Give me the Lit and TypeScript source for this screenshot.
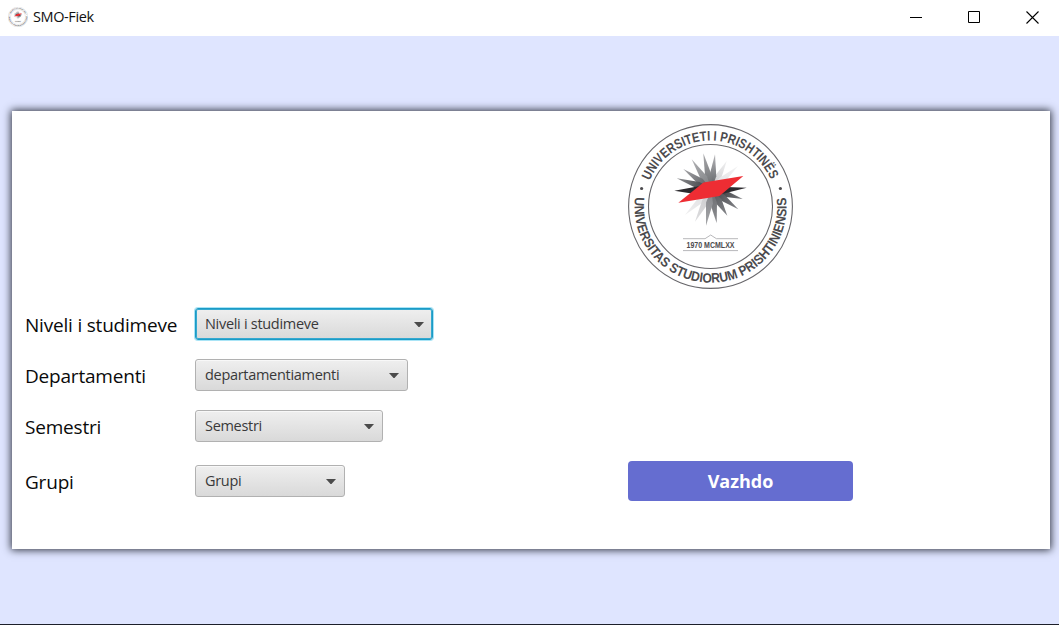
import { LitElement, html, svg, css } from "lit";
import { customElement, property } from "lit/decorators.js";

type Spike = [number, number, string, string];

// Tip x, tip y, inner shade, outer shade
const SPIKES: Spike[] = [
  [98.7, 37, "#d2d2d4", "#efeff0"],
  [110, 42, "#e4e4e6", "#f3f3f4"],
  [57, 91, "#e2e2e4", "#efeff0"],
  [67, 97.7, "#cfcfd1", "#dcdcde"],
  [87, 30.3, "#707276", "#b4b4b7"],
  [75.3, 29.3, "#77797c", "#aaaaad"],
  [63.7, 35.3, "#87898c", "#b0b0b3"],
  [55.3, 45, "#66686c", "#a4a4a7"],
  [48.7, 54.3, "#48494d", "#8f9093"],
  [114.7, 75, "#3c3d41", "#7b7c80"],
  [110.3, 85.3, "#505156", "#85868a"],
  [99.3, 91.7, "#5e6064", "#85868a"],
  [88.7, 99.3, "#727377", "#8e8f93"],
  [78, 101.7, "#8c8d91", "#a4a5a8"],
];
const CX = 83.5;
const CY = 65.5;

@customElement("university-seal")
export class UniversitySeal extends LitElement {
  @property({ type: Number }) size = 165;

  static styles = css`
    :host { display: block; flex: none; }
    svg { display: block; }
    .ring { font-family: "Liberation Sans Narrow", "Liberation Sans", sans-serif; font-weight: 700; fill: #4c4b4e; }
    .year { font-family: "Liberation Sans", sans-serif; font-weight: 700; font-size: 8.6px; fill: #4c4b4e; }
  `;

  private spike([x, y, inner, outer]: Spike, i: number) {
    const a = Math.atan2(y - CY, x - CX);
    const p = (d: number) => `${CX + 14 * Math.cos(a + d)},${CY + 14 * Math.sin(a + d)}`;
    return svg`
      <linearGradient id="g${i}" gradientUnits="userSpaceOnUse" x1=${CX} y1=${CY} x2=${x} y2=${y}>
        <stop offset=".25" stop-color=${inner}></stop><stop offset="1" stop-color=${outer}></stop>
      </linearGradient>
      <polygon points="${x},${y} ${p(0.25)} ${CX},${CY} ${p(-0.25)}" fill="url(#g${i})"></polygon>`;
  }

  render() {
    return html`
      <svg width=${this.size} height=${this.size} viewBox="0 0 165 165">
        <defs>
          <path id="upper" d="M21.75 56.7A66 66 0 0 1 143.25 56.7"></path>
          <path id="lower" d="M7.1 73.2A76 76 0 1 0 157.9 73.2"></path>
        </defs>
        <circle cx="82.5" cy="82.5" r="81.9" fill="#fff" stroke="#67666a" stroke-width="1.1"></circle>
        <circle cx="82.5" cy="82.5" r="62" fill="none" stroke="#67666a" stroke-width="1.1"></circle>
        <text class="ring" font-size="13.6"><textPath href="#upper" textLength="153" lengthAdjust="spacingAndGlyphs">UNIVERSITETI I PRISHTINËS</textPath></text>
        <text class="ring" font-size="13.6"><textPath href="#lower" textLength="257" lengthAdjust="spacingAndGlyphs">UNIVERSITAS STUDIORUM PRISHTINIENSIS</textPath></text>
        <circle cx="13.6" cy="64.5" r="1.6" fill="#4c4b4e"></circle>
        <circle cx="152.4" cy="64.5" r="1.6" fill="#4c4b4e"></circle>
        ${SPIKES.map((s, i) => this.spike(s, i))}
        <polygon points="46.3,66.7 72,62 118.7,63.7 96,69.5 70,70.5" fill="#2c2a2e"></polygon>
        <polygon points="50.3,78.7 75.5,58.5 115.3,52 91.5,72" fill="#ee2d33"></polygon>
        <path d="M55 114.7h22l5.700-3.700 5.700 3.700h21.600M55 126.600h55" fill="none" stroke="#a5a5a8" stroke-width=".8"></path>
        <text class="year" x="58.5" y="123.700" textLength="48" lengthAdjust="spacingAndGlyphs">1970 MCMLXX</text>
      </svg>`;
  }
}

@customElement("combo-box")
export class ComboBox extends LitElement {
  @property() value = "";
  @property({ type: Boolean, reflect: true }) focused = false;

  static styles = css`
    :host {
      box-sizing: border-box; display: flex; align-items: center; justify-content: space-between;
      height: 32px; padding: 0 8px 0 9px; border: 1px solid #b1b1b1; border-radius: 3px;
      background: linear-gradient(#efefef, #d9d9d9); box-shadow: inset 0 1px #f8f8f8;
      font: 14.5px/30px "Open Sans", "Noto Sans", sans-serif; letter-spacing: -.3px; color: #39393a;
    }
    :host([focused]) { border-color: #1c9bc6; box-shadow: 0 0 0 1px #a9e4f6, inset 0 0 0 1px #35a9d0; }
    .arrow { display: block; flex: none; }
  `;

  render() {
    return html`<span>${this.value}</span>
      <svg class="arrow" width="10" height="5" viewBox="0 0 10 5"><path d="M0 0h10L5.500 5h-1z" fill="#4b4b4b"></path></svg>`;
  }
}

const FIELDS = [
  { label: "Niveli i studimeve", value: "Niveli i studimeve", width: 238, focused: true },
  { label: "Departamenti", value: "departamentiamenti", width: 213, focused: false },
  { label: "Semestri", value: "Semestri", width: 188, focused: false },
  { label: "Grupi", value: "Grupi", width: 150, focused: false },
];

@customElement("app-root")
export class AppRoot extends LitElement {
  static styles = css`
    :host {
      box-sizing: border-box; display: flex; flex-direction: column; width: 100%; height: 625px;
      background: #dfe5ff; border-bottom: 1px solid #1d1f2a;
      font-family: "Open Sans", "Noto Sans", sans-serif; overflow: hidden;
    }
    .titlebar { display: flex; align-items: center; flex: none; height: 36px; padding: 0 20px 0 8px; background: #fff; box-sizing: border-box; }
    .title { margin-left: 5px; font-size: 14.5px; line-height: 20px; letter-spacing: -.4px; color: #111; padding-bottom: 2px; }
    .icon { margin-bottom: 2px; }
    .controls { display: flex; gap: 45px; margin: 0 0 2px auto; }
    .controls svg { display: block; }
    .card {
      box-sizing: border-box; display: grid; grid-template-columns: 616px 1fr; height: 438px;
      margin: 75px 9px 0 12px; padding: 13px 0 0; background: #fff; box-shadow: 0 0 8px 1px #2c303c;
    }
    .form { display: flex; flex-direction: column; padding: 184px 0 0 13px; }
    .field { display: grid; grid-template-columns: 170px auto; justify-content: start; height: 32px; margin-bottom: 19px; }
    .field:last-child { margin-top: 4px; }
    .label { font-size: 19px; line-height: 35px; letter-spacing: -.2px; color: #0a0a0a; white-space: nowrap; }
    .side { display: flex; flex-direction: column; align-items: flex-start; }
    .next {
      width: 225px; height: 40px; margin-top: 172px; padding: 0; border: 0; border-radius: 4px; background: #656dd0; color: #fff;
      font: 700 18px/38px "Open Sans", "Noto Sans", sans-serif;
    }
  `;

  render() {
    return html`
      <header class="titlebar">
        <university-seal class="icon" size="20"></university-seal>
        <span class="title">SMO-Fiek</span>
        <div class="controls">
          <svg width="13" height="13"><path d="M0 6.500h12" stroke="#000"></path></svg>
          <svg width="13" height="13"><path d="M.5 .5h11v11h-11z" fill="none" stroke="#000"></path></svg>
          <svg width="13" height="13"><path d="M.5 .5l12 12M12.500 .5l-12 12" stroke="#000" stroke-width="1.100"></path></svg>
        </div>
      </header>
      <main class="card">
        <div class="form">
          ${FIELDS.map(
            (f) => html`<div class="field">
              <span class="label">${f.label}</span>
              <combo-box style="width:${f.width}px" .value=${f.value} .focused=${f.focused}></combo-box>
            </div>`
          )}
        </div>
        <div class="side">
          <university-seal></university-seal>
          <button class="next">Vazhdo</button>
        </div>
      </main>`;
  }
}
